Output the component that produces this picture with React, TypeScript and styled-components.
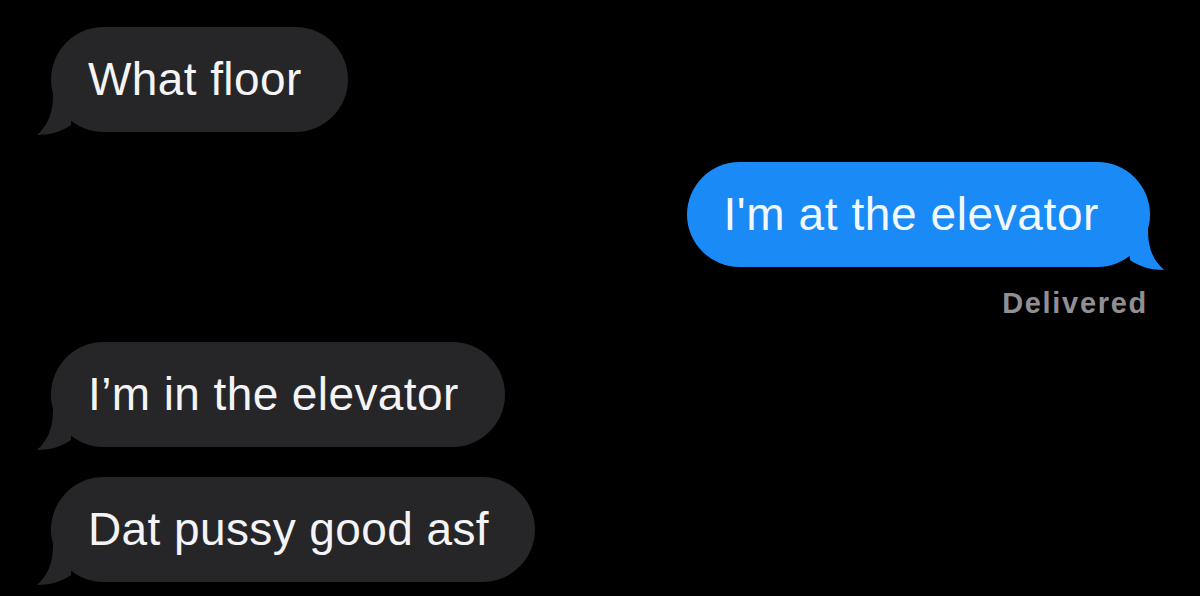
import styled, { createGlobalStyle, css } from "styled-components";

const GlobalStyle = createGlobalStyle`
  html, body {
    margin: 0;
    padding: 0;
    background: #000;
  }
  body {
    font-family: "Liberation Sans", Arial, sans-serif;
  }
`;

const Thread = styled.main`
  display: flex;
  flex-direction: column;
  width: 1200px;
  height: 596px;
  padding: 27px 50px 0 51px;
  box-sizing: border-box;
  background: #000;
  overflow: hidden;
`;

const Row = styled.div<{ $out?: boolean }>`
  display: flex;
  justify-content: ${(p) => (p.$out ? "flex-end" : "flex-start")};
  margin-bottom: 30px;

  ${(p) =>
    p.$out &&
    css`
      margin-bottom: 0;
    `}
`;

const Bubble = styled.div<{ $out?: boolean }>`
  position: relative;
  padding: 25px 46px 25px 37px;
  border-radius: 53px;
  font-size: 46px;
  line-height: 55px;
  letter-spacing: 0.4px;
  white-space: nowrap;
  color: #f4f4f6;
  background: #262628;

  ${(p) =>
    p.$out &&
    css`
      padding: 25px 51px 25px 36px;
      letter-spacing: 0.6px;
      color: #f2f8ff;
      background: #1a8bf6;
    `}
`;

const TailSvg = styled.svg<{ $out?: boolean }>`
  position: absolute;
  bottom: -3px;
  width: 36px;
  height: 40px;
  ${(p) =>
    p.$out
      ? css`
          right: -14px;
          transform: scaleX(-1);
        `
      : css`
          left: -14px;
        `}
`;

const Status = styled.div`
  display: flex;
  justify-content: flex-end;
  padding: 20px 2px 0 0;
  margin-bottom: 23px;
  font-size: 29px;
  line-height: 32px;
  font-weight: 700;
  letter-spacing: 1.7px;
  color: #8f8f94;
`;

const Tail: React.FC<{ out?: boolean; color: string }> = ({ out, color }) => (
  <TailSvg $out={out} viewBox="0 0 36 40">
    <path
      d="M16 0 C16 18 11 30 0 40 C12 40 24 37 34 30 L36 0 Z"
      fill={color}
    />
  </TailSvg>
);

type Message = { text: string; out?: boolean };

const Msg: React.FC<Message> = ({ text, out }) => (
  <Row $out={out}>
    <Bubble $out={out}>
      {text}
      <Tail out={out} color={out ? "#1a8bf6" : "#262628"} />
    </Bubble>
  </Row>
);

export default function App() {
  return (
    <>
      <GlobalStyle />
      <Thread>
        <Msg text="What floor" />
        <Msg text="I'm at the elevator" out />
        <Status>Delivered</Status>
        <Msg text="I’m in the elevator" />
        <Msg text="Dat pussy good asf" />
      </Thread>
    </>
  );
}
